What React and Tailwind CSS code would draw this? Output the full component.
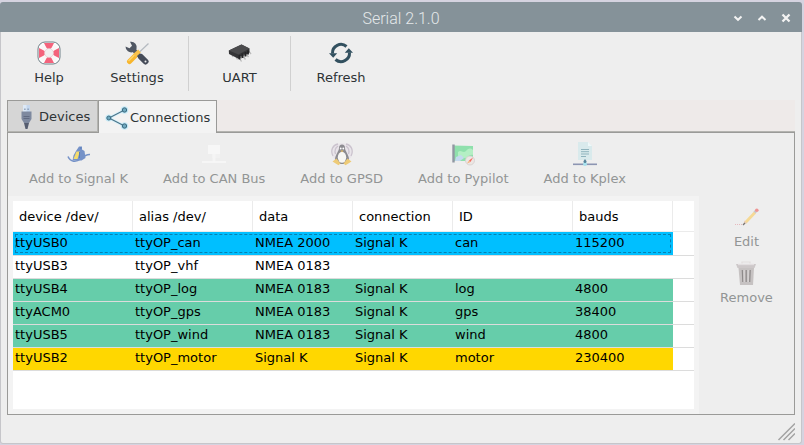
import React from "react";

function LifebuoyIcon() {
  return (
    <svg viewBox="0 0 24 24" className="size-6" aria-hidden="true">
      <rect x="1" y="1" width="22" height="22" rx="7" fill="#fbfbfb" stroke="#6f8087" strokeWidth="1" />
      <path d="M7 2h10l-3 6h-4zM7 22h10l-3-6h-4zM2 7v10l6-3v-4zM22 7v10l-6-3v-4z" fill="#f4637c" />
      <path d="M5 5l14 14M19 5L5 19" stroke="#fbf6f7" strokeWidth="3.600" />
      <circle cx="12" cy="12" r="4.500" fill="#f1eff0" stroke="#e6c3ca" strokeWidth=".6" />
    </svg>
  );
}

function ToolsIcon() {
  return (
    <svg viewBox="0 0 24 24" className="size-6" aria-hidden="true">
      <path d="M23.500 2.500l-9 8.500" stroke="#b4bac0" strokeWidth="1.200" />
      <path d="M12 13l-7.500 7.500" stroke="#f8b62d" strokeWidth="5" strokeLinecap="round" />
      <path d="M11 12.500l-7.500 7.500" stroke="#fcd46a" strokeWidth="1.500" />
      <path d="M7 7.500l12.500 12" stroke="#505763" strokeWidth="4.200" />
      <path d="M5 .8a5.800 5.800 0 0 1 6.500 7.700l-3.300 2.600A5.800 5.800 0 0 1 .5 5.500l4 1.700 2.500-2.500z" fill="#505763" />
      <path d="M9.500 14.500l5-4.500" stroke="#f9c14a" strokeWidth="4" />
      <path d="M16 16l4.500 4.500" stroke="#454b58" strokeWidth="6" strokeLinecap="round" />
      <circle cx="20.500" cy="20.500" r="1" fill="#eee" />
    </svg>
  );
}

function ChipIcon() {
  return (
    <svg viewBox="0 0 24 24" className="size-6" aria-hidden="true">
      <path d="M4 14l1 2M8 16l1.500 2.500M12 18l1.500 2.500M15.500 16l2 2.500M18.500 13.500l2 2.500M21 10.500l2 2.500" stroke="#b9b9b9" strokeWidth="1.300" />
      <path d="M.8 9.500L13.500 3.500 21.500 7.500v4L11 18 1 13z" fill="#353537" />
      <path d="M.8 9.500L13.500 3.500 21.500 7.500 10.500 13.500z" fill="#4b4b4d" />
      <path d="M11.500 14v4.500M14.500 12.500v4.500M17.500 11v4.500M20 9.500v4" stroke="#242426" strokeWidth="1.800" />
      <path d="M13 15v3M16 13.500v3" stroke="#8d8d8d" strokeWidth=".8" />
    </svg>
  );
}

function RefreshIcon() {
  return (
    <svg viewBox="0 0 24 24" className="size-6" aria-hidden="true">
      <path d="M3.500 12.500A8.500 8.500 0 0 1 17.500 5.500M20.500 11.500A8.500 8.500 0 0 1 6.500 18.500" fill="none" stroke="#32505f" strokeWidth="3" />
      <path d="M0 12.200h8.200L4.200 16.800zM24 11.800h-8.200l4-4.600z" fill="#32505f" />
    </svg>
  );
}

function UsbPlugIcon() {
  return (
    <svg viewBox="0 0 24 24" className="size-6" aria-hidden="true">
      <path d="M9 0h7v7H9z" fill="#c5d7ee" />
      <path d="M9 0h3.500v7H9z" fill="#dce8f6" />
      <path d="M10.300 3.500h1.200v1.500h-1.200zM13.500 3.500h1.200v1.500h-1.200z" fill="#7d90ab" />
      <path d="M7.500 6.500h10v7.500l-2.500 4h-5l-2.500-4z" fill="#7e899f" />
      <path d="M9.500 11.500h6M9.500 13.500h6" stroke="#5e687f" strokeWidth=".9" />
      <path d="M10 18h5l-1.500 6h-2z" fill="#565d70" />
    </svg>
  );
}

function ShareIcon() {
  return (
    <svg viewBox="0 0 24 24" className="size-6" aria-hidden="true">
      <path d="M19.500 4L4 12l15.500 8" fill="none" stroke="#d8f1fa" strokeWidth="3" />
      <g fill="#c6eaf7">
        <circle cx="3.800" cy="12" r="3.500" />
        <circle cx="19.500" cy="4" r="3.800" />
        <circle cx="19.500" cy="20" r="3.800" />
      </g>
      <path d="M19.500 4L4 12l15.500 8" fill="none" stroke="#4a7388" strokeWidth="1.100" />
      <g fill="#6fa9bf" stroke="#3b6a80" strokeWidth="1">
        <circle cx="3.800" cy="12" r="2" />
        <circle cx="19.500" cy="4" r="2.200" />
        <circle cx="19.500" cy="20" r="2.200" />
      </g>
    </svg>
  );
}

function SignalKIcon() {
  return (
    <svg viewBox="0 0 24 24" className="size-6" aria-hidden="true">
      <path d="M12 4.500h3v3l2.500 1.500 1 7-4 2.500H5.500l1-5L9 9z" fill="#7592c8" />
      <path d="M9.500 9.500h3.300L10.500 17H6.500z" fill="#f5dc6c" />
      <path d="M12.500 10v6M13 6h1.500" stroke="#567bb5" strokeWidth="1" />
      <path d="M1 14.500c2.500 5.500 8 6.200 12.500 2.500 3-2.500 5.500-4.800 9.500-4.500" fill="none" stroke="#7592c8" strokeWidth="1.600" />
    </svg>
  );
}

function CanBusIcon() {
  return (
    <svg viewBox="0 0 24 24" className="size-6" aria-hidden="true">
      <path d="M10 3h8v13h-8z" fill="#f1f1f1" />
      <path d="M6 3h12v9H6z" fill="#f7f7f7" />
      <path d="M12 12v8" stroke="#f5f5f5" strokeWidth="3" />
      <path d="M0 20h24" stroke="#f8f8f8" strokeWidth="1.600" />
    </svg>
  );
}

function PenguinIcon() {
  return (
    <svg viewBox="0 0 24 24" className="size-6" aria-hidden="true">
      <circle cx="12" cy="11" r="10" fill="#e9e5ea" />
      <path d="M3 14C0 8 3 3 8 2M21 14c3-6 0-11-5-12M5.500 12c-1.500-4 .5-6.500 2.500-8M18.500 12c1.500-4-.5-6.500-2.500-8" fill="none" stroke="#cbc3ce" strokeWidth="1.300" />
      <path d="M12 2.500c-2 0-3 1.300-3 3.500 0 3-4 7-4 11.500 0 3 3 4.500 7 4.500s7-1.500 7-4.500c0-4.500-4-8.500-4-11.500 0-2.200-1-3.500-3-3.500z" fill="#8d8c91" />
      <ellipse cx="12" cy="15.300" rx="4.200" ry="5.500" fill="#f8f7f3" />
      <circle cx="10.700" cy="6.500" r=".9" fill="#fff" />
      <circle cx="13.300" cy="6.500" r=".9" fill="#fff" />
      <path d="M10.300 8.500h3.400L12 10.300z" fill="#e9bd63" />
      <path d="M2.500 19.500l4-3 4 5-2 1.800zM21.500 19.500l-4-3-4 5 2 1.800z" fill="#eecb77" />
    </svg>
  );
}

function PypilotIcon() {
  return (
    <svg viewBox="0 0 24 24" className="size-6" aria-hidden="true">
      <path d="M2 3.500L22 4v15H2z" fill="#8fe0ac" />
      <path d="M7 10c3-3 5 2 8-1s4-3 7-1v5c-4-1-5 3-8 3s-4-2-7-1z" fill="#b4efc4" />
      <path d="M5 15l5-2 3 3-4 3H4z" fill="#c4d9ef" />
      <path d="M2.500 2.500v18" stroke="#9197a2" strokeWidth="2.400" />
      <circle cx="19" cy="18.500" r="4.500" fill="#ece6e4" stroke="#d3cecc" strokeWidth=".8" />
      <path d="M22 15.500l-2.500 4.500-1.500-1.500z" fill="#f56b60" />
      <path d="M16 21.500l3.500-1.500-1.500-1.500z" fill="#f5b27c" />
    </svg>
  );
}

function KplexIcon() {
  return (
    <svg viewBox="0 0 24 24" className="size-6" aria-hidden="true">
      <path d="M5 0h10l4 4v14H5z" fill="#d9eaec" />
      <path d="M15 0v4h4z" fill="#eef8f9" />
      <path d="M8 7.500h8M8 9.700h8M8 12h8M8 14.500h5" stroke="#8fb4bd" strokeWidth="1" />
      <path d="M12 17.500v4" stroke="#5f88a0" strokeWidth="1.500" />
      <path d="M0 22.300h24" stroke="#8c95b2" strokeWidth="1.600" />
      <circle cx="12" cy="22" r="2" fill="#a8e2ee" />
      <circle cx="12" cy="19.500" r="1.500" fill="#56849b" />
    </svg>
  );
}

function PencilIcon() {
  return (
    <svg viewBox="0 0 24 24" className="size-6" aria-hidden="true">
      <path d="M0 19.500h8" stroke="#e6b9be" strokeWidth="1" strokeDasharray="1 1" />
      <path d="M10.500 17.500L20 7.500" stroke="#f5d995" strokeWidth="2.800" />
      <path d="M9.500 15.500l2.500 2.500-3.800 1.800z" fill="#e8cdb5" />
      <path d="M8 20l2-2" stroke="#777" strokeWidth="1.200" />
      <path d="M19.500 7.500L21 6" stroke="#c8c8ce" strokeWidth="2.800" />
      <circle cx="21.800" cy="5.200" r="1.800" fill="#ee9594" />
    </svg>
  );
}

function TrashIcon() {
  return (
    <svg viewBox="0 0 24 24" className="size-6" aria-hidden="true">
      <path d="M8 2.500V1h8v1.500" fill="none" stroke="#e2dddd" strokeWidth="1.200" />
      <path d="M2 3h20l-1.500 4h-17z" fill="#cdc8c9" />
      <path d="M4 3.500h16" stroke="#e3dfe0" strokeWidth="1.300" />
      <path d="M4.500 7h15.500L19 24H6z" fill="#c6c2c2" />
      <path d="M8.300 9l.5 12M12.200 9v12M16.200 9l-.5 12" stroke="#8d8989" strokeWidth="1.200" />
      <path d="M10.200 9v12M14.200 9v12" stroke="#dbd7d7" strokeWidth="1" />
    </svg>
  );
}

function ToolButton({ icon: Icon, label, className = "", disabled = false }) {
  return (
    <button
      type="button"
      disabled={disabled}
      className={`flex flex-col items-center gap-[5px] leading-4 whitespace-nowrap disabled:text-[#929595] ${className}`}
    >
      <Icon />
      {label}
    </button>
  );
}

function Separator() {
  return <div className="mt-1 h-[55px] w-px bg-[#d0d0d0]" />;
}

const columns = ["device /dev/", "alias /dev/", "data", "connection", "ID", "bauds"];

const rows = [
  { color: "bg-[#00bfff]", selected: true, cells: ["ttyUSB0", "ttyOP_can", "NMEA 2000", "Signal K", "can", "115200"] },
  { color: "bg-white", cells: ["ttyUSB3", "ttyOP_vhf", "NMEA 0183", "", "", ""] },
  { color: "bg-[#66cdaa]", cells: ["ttyUSB4", "ttyOP_log", "NMEA 0183", "Signal K", "log", "4800"] },
  { color: "bg-[#66cdaa]", cells: ["ttyACM0", "ttyOP_gps", "NMEA 0183", "Signal K", "gps", "38400"] },
  { color: "bg-[#66cdaa]", cells: ["ttyUSB5", "ttyOP_wind", "NMEA 0183", "Signal K", "wind", "4800"] },
  { color: "bg-[#ffd700]", cells: ["ttyUSB2", "ttyOP_motor", "Signal K", "Signal K", "motor", "230400"] },
];

const connectActions = [
  { icon: SignalKIcon, label: "Add to Signal K" },
  { icon: CanBusIcon, label: "Add to CAN Bus" },
  { icon: PenguinIcon, label: "Add to GPSD" },
  { icon: PypilotIcon, label: "Add to Pypilot" },
  { icon: KplexIcon, label: "Add to Kplex" },
];

function ConnectionsTable() {
  return (
    <table className="w-full table-fixed border-separate border-spacing-0 text-left text-black">
      <colgroup>
        <col className="w-[120px]" />
        <col className="w-[120px]" />
        <col className="w-[100px]" />
        <col className="w-[100px]" />
        <col className="w-[120px]" />
        <col className="w-[100px]" />
        <col />
      </colgroup>
      <thead>
        <tr className="h-[31px]">
          {columns.map((name) => (
            <th key={name} scope="col" className="border-r border-b border-[#ebebeb] p-0 pt-0.5 pl-1.5 font-normal">
              {name}
            </th>
          ))}
          <td className="border-b border-[#ebebeb] p-0" />
        </tr>
      </thead>
      <tbody>
        {rows.map((row) => (
          <tr
            key={row.cells[0]}
            aria-selected={row.selected}
            className={row.selected ? "relative h-6" : "h-[23px]"}
          >
            {row.cells.map((cell, i) => (
              <td key={i} className={`border-b border-[#dcdcdc] bg-clip-padding p-0 pb-0.5 pl-0.5 leading-5 ${row.color}`}>
                {cell}
              </td>
            ))}
            <td className="border-b border-[#dcdcdc] p-0">
              {row.selected && (
                <span className="pointer-events-none absolute top-0.5 right-[23px] bottom-[3px] left-0.5 border border-dashed border-[#0b7fae]" />
              )}
            </td>
          </tr>
        ))}
      </tbody>
    </table>
  );
}

export default function App() {
  return (
    <div className="flex h-screen flex-col bg-[#d5d3e0] pt-0.5 pr-0.5 pb-px font-['DejaVu_Sans',sans-serif] text-[13px] text-[#2e3436]">
      <header className="grid h-[30px] shrink-0 grid-cols-[1fr_auto_1fr] items-center rounded-t-[3px] bg-[#859299] px-2 pt-0.5 text-[#f3f3f3]">
        <h1 className="col-start-2 pt-px font-['Roboto',sans-serif] text-base leading-5 font-light text-[#e4e8ea]">Serial 2.1.0</h1>
        <div className="flex justify-end gap-2">
          <button type="button" aria-label="Minimize" className="flex size-4 items-center justify-center">
            <svg viewBox="0 0 10 10" className="size-2.5" fill="none" stroke="currentColor" strokeWidth="2">
              <path d="M1.500 3.500L5 6.800l3.500-3.300" />
            </svg>
          </button>
          <button type="button" aria-label="Maximize" className="flex size-4 items-center justify-center">
            <svg viewBox="0 0 10 10" className="size-2.5" fill="none" stroke="currentColor" strokeWidth="2">
              <path d="M1.500 7L5 3.700 8.500 7" />
            </svg>
          </button>
          <button type="button" aria-label="Close" className="flex size-4 items-center justify-center">
            <svg viewBox="0 0 10 10" className="size-2.5" fill="none" stroke="currentColor" strokeWidth="2.300">
              <path d="M1.500 1.500l7 7M8.500 1.500l-7 7" />
            </svg>
          </button>
        </div>
      </header>

      <main className="flex min-h-0 flex-1 flex-col rounded-b-[3px] border border-t-0 border-[#c6c6ca] bg-[#eeeeee] px-1.5">
        <div className="flex h-[68px] shrink-0 items-start">
          <ToolButton icon={LifebuoyIcon} label="Help" className="mt-[9px] w-[84px]" />
          <ToolButton icon={ToolsIcon} label="Settings" className="mt-[9px] mr-[5px] w-[92px]" />
          <Separator />
          <ToolButton icon={ChipIcon} label="UART" className="mt-[9px] w-[101px]" />
          <Separator />
          <ToolButton icon={RefreshIcon} label="Refresh" className="mt-[9px] w-[100px]" />
        </div>

        <div role="tablist" className="flex h-8 shrink-0 bg-[#eeeae9]">
          <button
            type="button"
            role="tab"
            aria-selected="false"
            className="flex w-[91px] items-center gap-px border-t border-r border-b border-l border-t-[#9a9a98] border-r-[#b4b4b0] border-b-[#b4b4b0] border-l-[#9a9a98] bg-[#d6d6d6] pt-px pl-1.5"
          >
            <UsbPlugIcon />
            Devices
          </button>
          <button
            type="button"
            role="tab"
            aria-selected="true"
            className="z-10 -mb-px flex w-[119px] items-center gap-px border border-b-0 border-[#9a9a98] bg-[#f3f3f3] pt-0.5 pl-1.5"
          >
            <ShareIcon />
            Connections
          </button>
          <div className="flex-1 border-b border-[#b4b4b0]" />
        </div>

        <section className="flex min-h-0 flex-1 flex-col border border-[#9a9a98]" role="tabpanel" aria-label="Connections">
          <div className="flex h-[63px] shrink-0 items-start gap-[35px] pt-[9px] pl-[21px]">
            {connectActions.map((action) => (
              <ToolButton key={action.label} icon={action.icon} label={action.label} disabled />
            ))}
          </div>
          <div className="flex min-h-0 flex-1">
            <div className="flex flex-1 bg-[#f3f3f3] p-[5px]">
              <div className="flex-1 bg-white">
                <ConnectionsTable />
              </div>
            </div>
            <div className="flex w-[95px] flex-col items-center gap-[11px] pt-[9px]">
              <ToolButton icon={PencilIcon} label="Edit" disabled />
              <ToolButton icon={TrashIcon} label="Remove" disabled />
            </div>
          </div>
        </section>

        <footer className="flex h-7 shrink-0 items-start justify-end pt-2">
          <svg viewBox="0 0 18 18" className="size-[18px]" fill="none" stroke="#a3a3a3" strokeWidth="1.500" aria-hidden="true">
            <path d="M1.500 17L18 .5M6.500 17L18 5.500M11.500 17l6.500-6.500" />
          </svg>
        </footer>
      </main>
    </div>
  );
}
